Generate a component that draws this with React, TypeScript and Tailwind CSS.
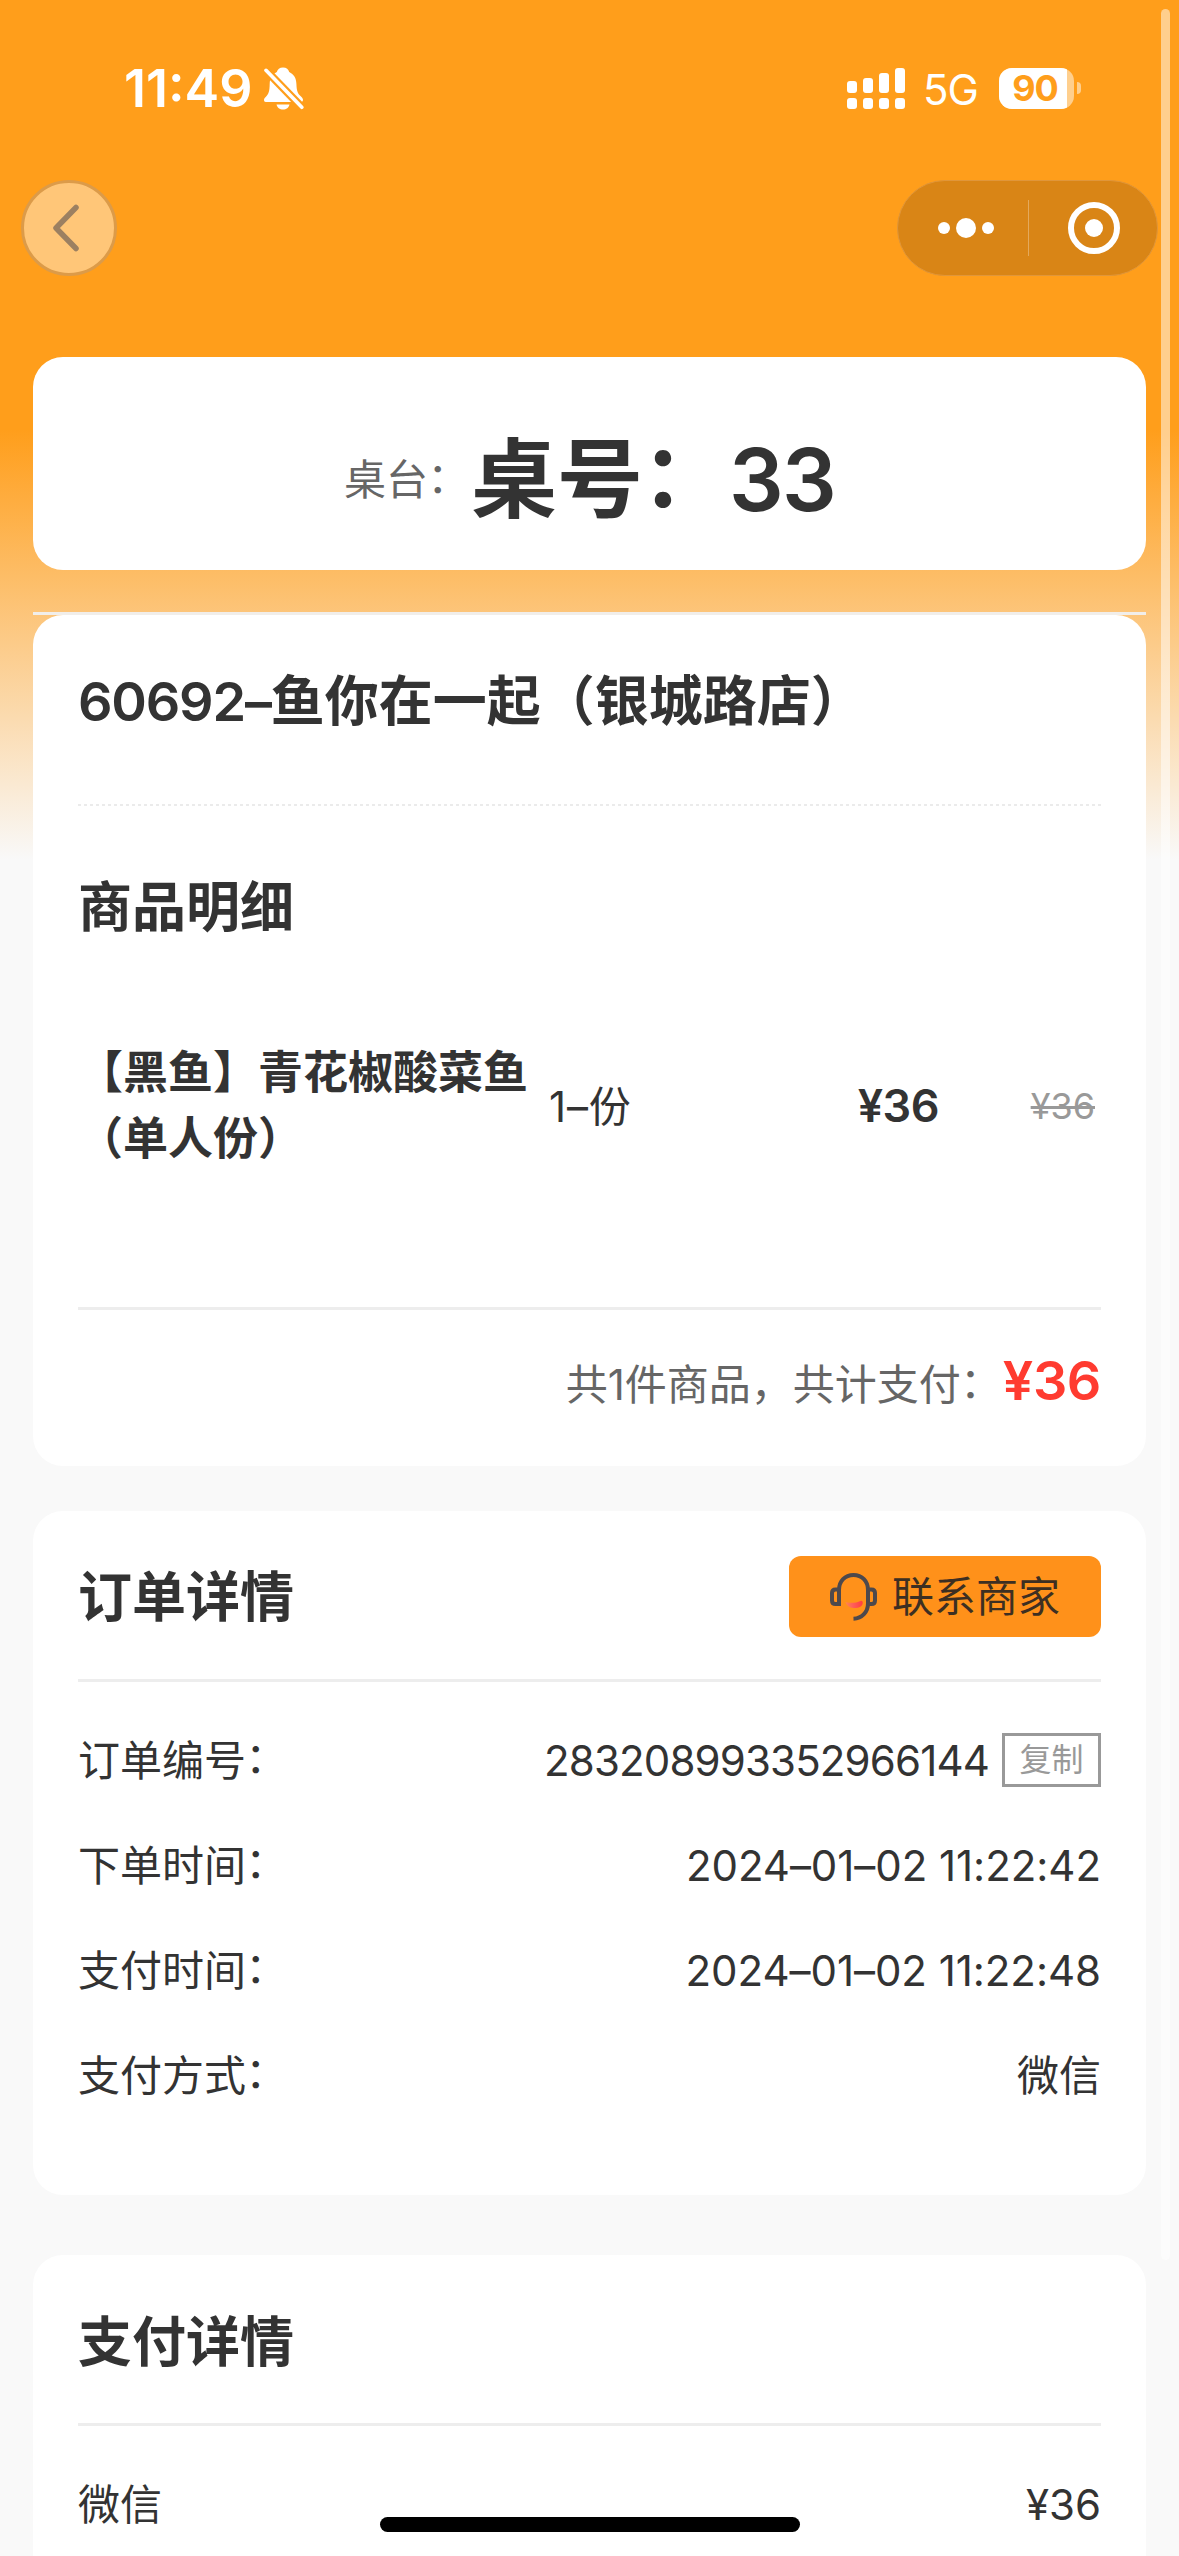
import { ReactNode } from 'react';
import clsx from 'clsx';

const orderInfo = [
  { label: '订单编号', value: '283208993352966144', copy: true },
  { label: '下单时间', value: '2024–01–02 11:22:42' },
  { label: '支付时间', value: '2024–01–02 11:22:48' },
  { label: '支付方式', value: '微信' },
];

function BellOff() {
  return (
    <svg width="40" height="43" viewBox="0 0 40 43" className="ml-[11px]">
      <path
        d="M19 0.5c3.4 0 5.6 2 6.2 4.6 4.6 2.1 7 6.2 7.2 11.6.3 7.300 1 9.300 4.600 12.900 1.600 1.700 2 2.400 2 3.300 0 1.200-.9 2.100-2.300 2.100H1.800C.6 35 0 34.100 0 33c0-1.200.5-1.900 1.700-3.100C5 26.500 5.500 24 5.700 16.700 5.900 11.300 8.300 7.200 12.800 5.100 13.500 2.500 15.600.5 19 .5Z"
        fill="white"
      />
      <path d="M12.500 37.500h13c-.6 3-3.200 5-6.500 5s-5.900-2-6.500-5Z" fill="white" />
      <path d="M2 3.300 37.800 40.300" stroke="#ff9e1b" strokeWidth="8" />
      <path d="M2 3.300 37.800 40.300" stroke="white" strokeWidth="3.600" strokeLinecap="round" />
    </svg>
  );
}

function Signal() {
  return (
    <svg width="58" height="41" viewBox="0 0 58 41" fill="white">
      <rect x="0" y="13" width="10" height="12" rx="3" />
      <rect x="16" y="10" width="10" height="15" rx="3" />
      <rect x="32" y="5" width="10" height="20" rx="3" />
      <rect x="48" y="0" width="10" height="25" rx="3" />
      <rect x="0" y="30" width="10" height="11" rx="3" />
      <rect x="16" y="30" width="10" height="11" rx="3" />
      <rect x="32" y="30" width="10" height="11" rx="3" />
      <rect x="48" y="30" width="10" height="11" rx="3" />
    </svg>
  );
}

function Headset() {
  return (
    <svg width="47" height="48" viewBox="0 0 47 48" fill="none">
      <defs>
        <linearGradient id="smile" x1="15" y1="0" x2="33" y2="0" gradientUnits="userSpaceOnUse">
          <stop offset="0" stopColor="#ff8a4a" />
          <stop offset="0.450" stopColor="#ff5d5a" />
          <stop offset="1" stopColor="#ff3d3d" />
        </linearGradient>
      </defs>
      <g stroke="#4d494c" strokeWidth="4">
        <path d="M9 32V17C9 8 15 2 23.500 2S38 8 38 17v13.500C38 39 32 45.500 23.500 45.800" />
        <path d="M9 16.500H5.500c-2.200 0-3.500 1.400-3.500 3.600v7.400c0 2.200 1.400 3.500 3.500 3.500H11" />
        <path d="M38 16.500h3.500c2.200 0 3.500 1.400 3.500 3.600v7.400c0 2.200-1.400 3.500-3.500 3.500H38" />
      </g>
      <path
        d="M15.500 29c5 1.500 10.500 1 15-1 1.500-.6 2.600.8 2.200 2.500-1 4-5 4.700-9 4.500-4.500-.2-7.200-2.300-8.200-6Z"
        fill="url(#smile)"
      />
    </svg>
  );
}

function StatusBar() {
  return (
    <div className="flex h-[176px] items-center justify-between pl-[124px] pr-[97px] text-white">
      <div className="flex items-center">
        <span className="w-[129px] whitespace-nowrap pt-0.5 text-[52px] font-semibold leading-none">11:49</span>
        <BellOff />
      </div>
      <div className="flex items-center">
        <Signal />
        <span className="ml-[18px] mt-1 w-[56px] text-[42px] leading-none tracking-[-1px]">5G</span>
        <div className="ml-[20px] flex h-[41px] w-[75px] items-center overflow-hidden rounded-[13px] bg-white/50">
          <div className="flex h-full w-[68px] items-center justify-center bg-white pl-1 text-[36px] font-bold leading-none tracking-[-1px] text-[#ff9e1b]">
            90
          </div>
        </div>
        <div className="ml-[3px] mr-px h-3 w-1 rounded-r-full bg-white/50" />
      </div>
    </div>
  );
}

function NavBar() {
  return (
    <div className="mt-1 flex h-24 items-center justify-between pl-[21px] pr-[21px]">
      <button className="flex size-24 items-center justify-center rounded-full border-[3px] border-[#dc9b49] bg-[#ffc678]">
        <svg width="28" height="48" viewBox="0 0 28 48" fill="none" className="mr-1.5">
          <path d="M24 3.500 4 24l20 20.500" stroke="#9c8061" strokeWidth="5.500" strokeLinecap="round" strokeLinejoin="round" />
        </svg>
      </button>
      <div className="flex h-24 w-[261px] items-center rounded-full border border-[#e0963a] bg-[#d98516]">
        <div className="flex w-[130px] items-center justify-center gap-1.5 pl-1.5">
          <i className="size-3 rounded-full bg-white" />
          <i className="size-5 rounded-full bg-white" />
          <i className="size-3 rounded-full bg-white" />
        </div>
        <div className="h-14 w-px bg-white/30" />
        <div className="flex flex-1 justify-center pl-0.5">
          <div className="flex size-[52px] items-center justify-center rounded-full border-[6px] border-white">
            <i className="size-[18px] rounded-full bg-white" />
          </div>
        </div>
      </div>
    </div>
  );
}

function Card({ className, children }: { className?: string; children: ReactNode }) {
  return <section className={clsx('mx-[33px] rounded-[30px] bg-white px-[45px]', className)}>{children}</section>;
}

function Heading({ children }: { children: ReactNode }) {
  return <h2 className="pt-0.5 text-[54px] font-semibold leading-[58px]">{children}</h2>;
}

// full-width colon, lifted to the middle of the line
function Colon() {
  return <span className="relative -left-[0.02em] -top-[0.05em]">：</span>;
}

function Row({ label, value, copy, colon = true }: { label: string; value: string; copy?: boolean; colon?: boolean }) {
  return (
    <div className="flex h-[105px] items-center justify-between text-[42px] leading-[60px]">
      <span>
        {label}
        {colon && <Colon />}
      </span>
      <div className="flex items-center">
        <span className={copy ? 'tracking-[-0.85px]' : 'tracking-[-0.05px]'}>{value}</span>
        {copy && (
          <button className="mb-0.5 ml-[13px] flex h-[54px] w-[99px] items-center justify-center border-[3px] border-[#999] text-[32px] leading-none text-[#999]">
            复制
          </button>
        )}
      </div>
    </div>
  );
}

export default function App() {
  return (
    <div className="relative h-[2556px] w-[1179px] overflow-hidden bg-[#f9f9f9] bg-[linear-gradient(to_bottom,#ff9e1b_0px,#ff9e1b_430px,#f9f9f9_860px)] font-['Inter','Noto_Sans_CJK_SC',sans-serif] text-[#333]">
      <StatusBar />
      <NavBar />

      <Card className="mt-[81px] flex h-[213px] items-center justify-center pt-[33px]">
        <span className="text-[42px] leading-[60px] text-[#666]">
          桌台
          <Colon />
        </span>
        <span className="pl-px text-[86px] font-semibold leading-[120px]">
          桌号
          <Colon />
          <span className="tracking-[-1.8px]">33</span>
        </span>
      </Card>

      <div className="mx-[33px] mt-[42px] h-[3px] bg-[#f1eeea]" />
      <Card className="h-[851px] pt-14">
        <Heading>
          <span className="tracking-[-1.2px]">60692–</span>鱼你在一起（银城路店）
        </Heading>
        <div className="mt-[73px] h-0.5 bg-[repeating-linear-gradient(90deg,#ebebeb_0px,#ebebeb_3px,transparent_3px,transparent_6px)]" />
        <div className="pt-[71px]">
          <Heading>商品明细</Heading>
        </div>
        <div className="mt-[103px] flex h-[132px] items-center">
          <div className="w-[471px] text-[45px] font-semibold leading-[66px]">
            【黑鱼】青花椒酸菜鱼
            <br />
            （单人份）
          </div>
          <div className="w-[250px] text-[42px] tracking-[0.8px]">1–份</div>
          <div className="w-[140px] text-right text-[45px] font-semibold tracking-[-0.5px]">¥36</div>
          <div className="flex-1 pr-1.5 text-right text-[36px] text-[#999] line-through decoration-[3px]">¥36</div>
        </div>
        <div className="mt-[135px] h-[3px] bg-[#ededed]" />
        <div className="flex items-baseline justify-end pt-[38px]">
          <span className="text-[42px] text-[#666]">
            共1件商品，共计支付
            <Colon />
          </span>
          <span className="text-[54px] font-semibold leading-[66px] tracking-[-0.4px] text-[#ff3b30]">¥36</span>
        </div>
      </Card>

      <Card className="mt-[45px] h-[684px] pt-[45px]">
        <div className="flex h-[81px] items-center justify-between">
          <Heading>订单详情</Heading>
          <button className="flex h-[81px] w-[312px] items-center rounded-xl bg-[#ff911a] pl-[41px]">
            <Headset />
            <span className="ml-[15px] text-[42px] leading-none text-[#3d2f22]">联系商家</span>
          </button>
        </div>
        <div className="mb-[26px] mt-[42px] h-[3px] bg-[#ededed]" />
        {orderInfo.map((item) => (
          <Row key={item.label} {...item} />
        ))}
      </Card>

      <Card className="mt-[60px] h-[400px] pt-[57px]">
        <Heading>支付详情</Heading>
        <div className="mb-[26px] mt-[51px] h-[3px] bg-[#ededed]" />
        <Row label="微信" value="¥36" colon={false} />
      </Card>

      {/* page scroll thumb */}
      <div className="absolute left-[1161px] top-[9px] h-[2251px] w-[9px] rounded-full bg-white/50" />
      {/* home indicator */}
      <div className="absolute bottom-6 left-[380px] h-[15px] w-[420px] rounded-full bg-black" />
    </div>
  );
}
